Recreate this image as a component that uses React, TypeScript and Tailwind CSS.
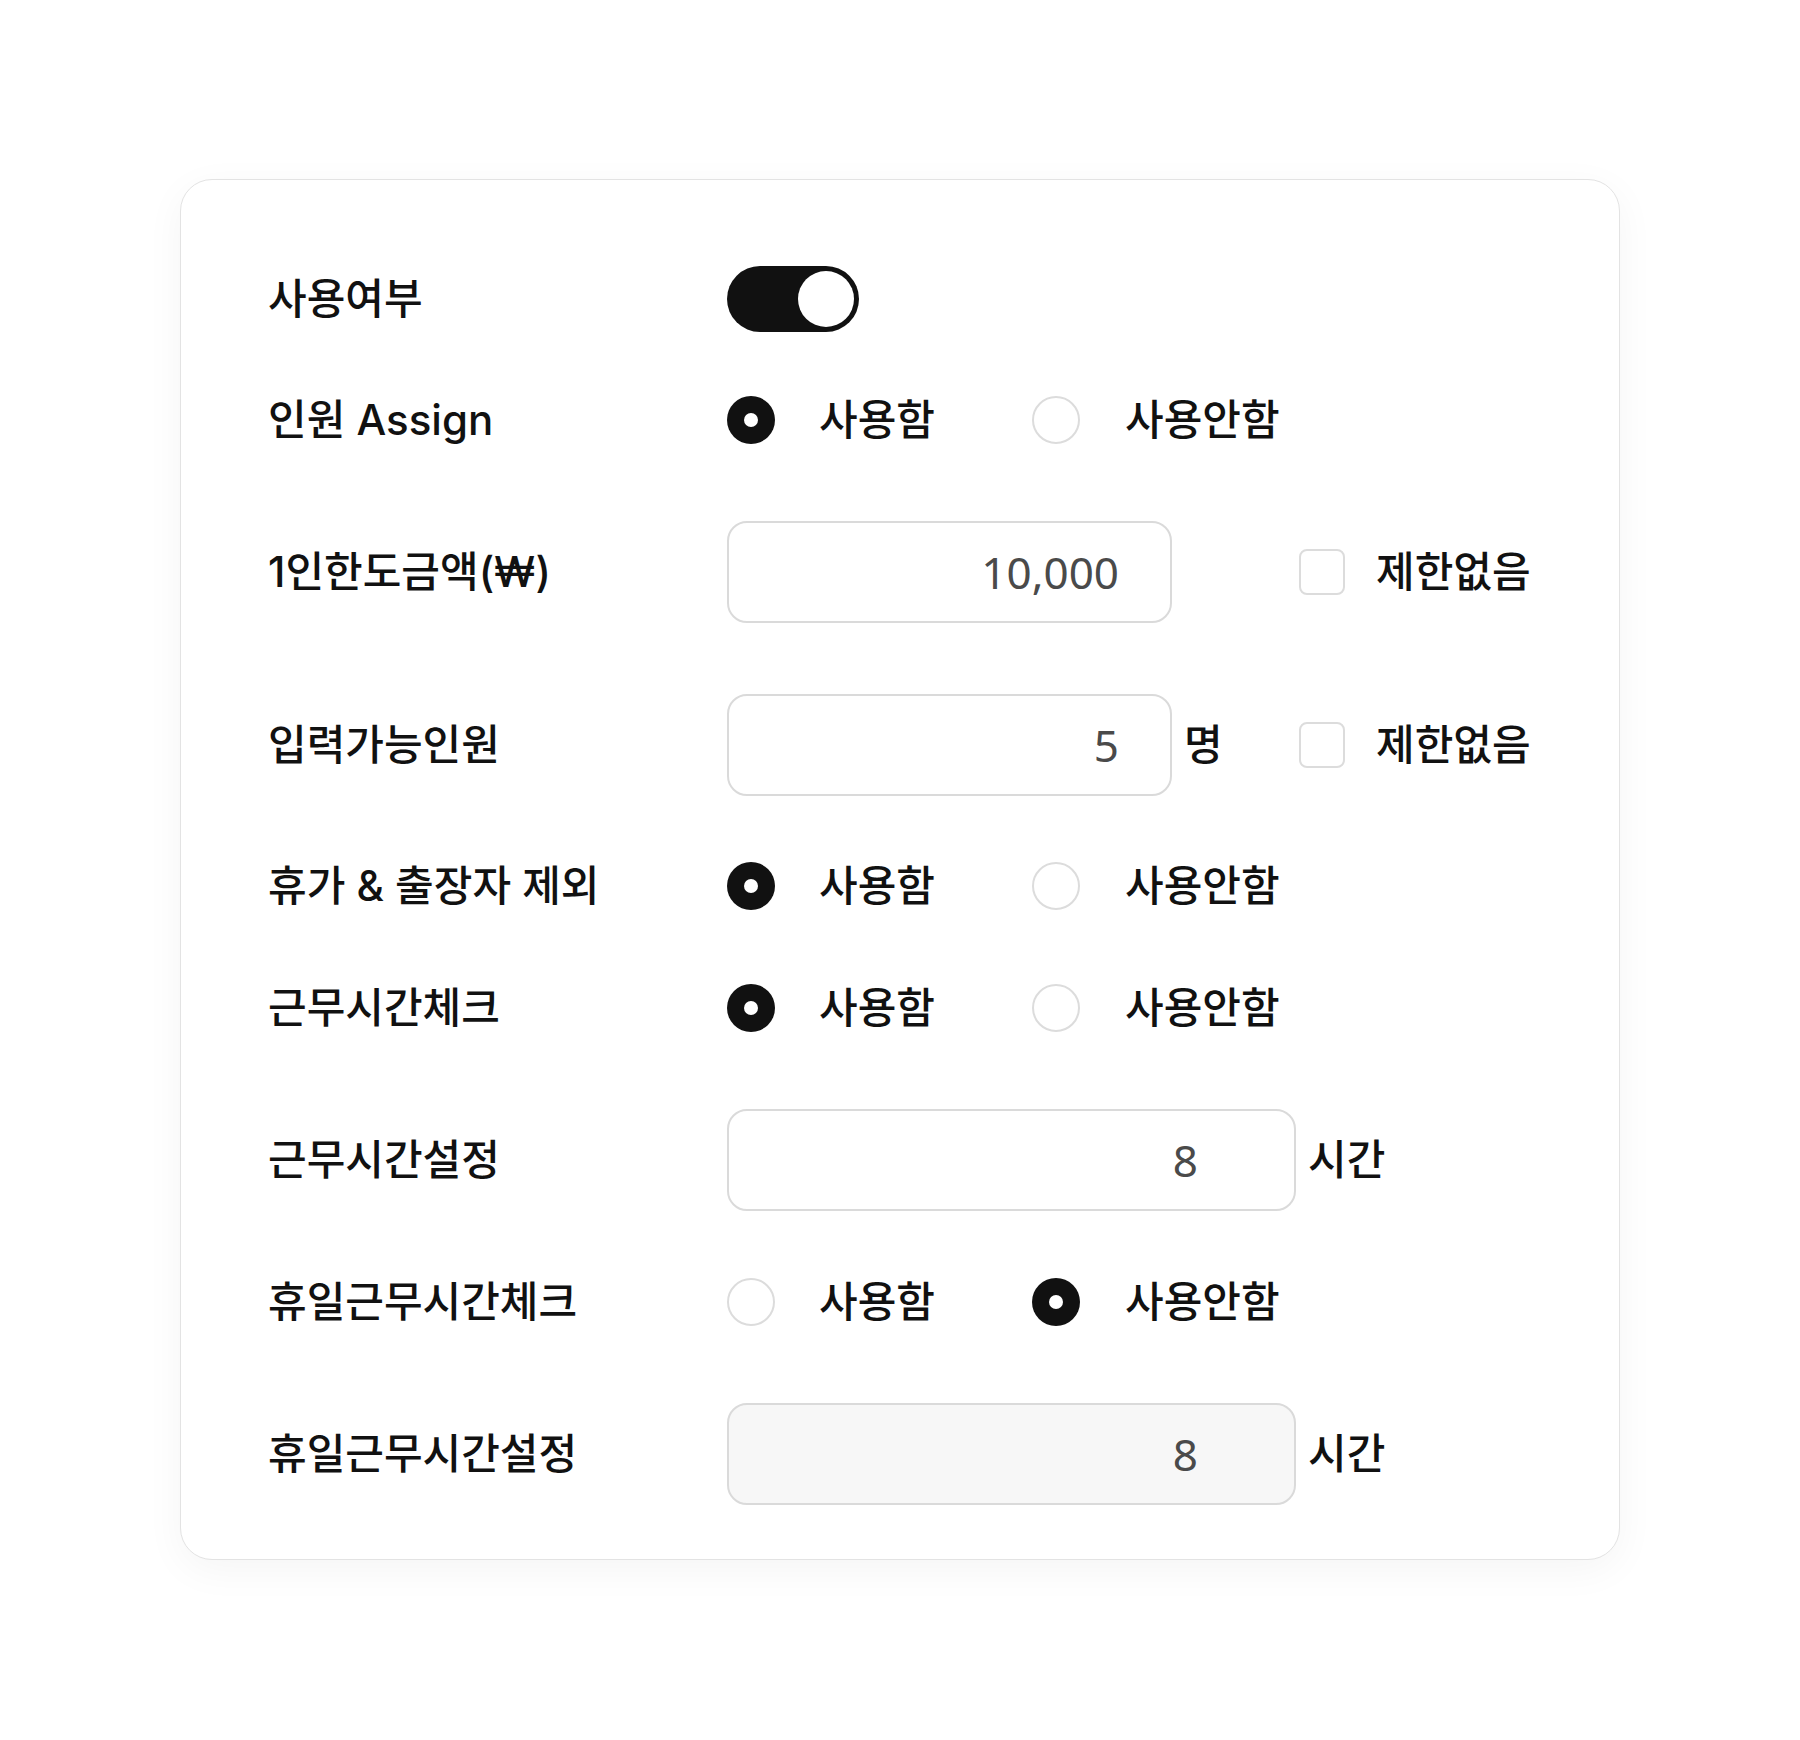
import React from "react";

const KR = { fontFamily: '"Inter", "Noto Sans CJK KR", sans-serif' };
const NUM = { fontFamily: '"Noto Sans", sans-serif' };

const TXT = "text-[42px] tracking-[0px] font-medium text-[#111111] leading-none";

function Label({ children }: { children: React.ReactNode }) {
  return (
    <div className={`w-[459px] shrink-0 ${TXT}`} style={KR}>
      {children}
    </div>
  );
}

function Radio({ checked }: { checked: boolean }) {
  return checked ? (
    <div className="w-[48px] h-[48px] rounded-full bg-[#111111] flex items-center justify-center shrink-0">
      <div className="w-[14px] h-[14px] rounded-full bg-white" />
    </div>
  ) : (
    <div className="w-[48px] h-[48px] rounded-full border-2 border-[#dcdcdc] bg-white shrink-0" />
  );
}

function RadioRow({ label, first, mt }: { label: React.ReactNode; first: boolean; mt: string }) {
  return (
    <div className={`flex items-center ${mt}`}>
      <Label>{label}</Label>
      <div className="flex items-center w-[305px] shrink-0">
        <Radio checked={first} />
        <span className={`ml-[44px] ${TXT}`} style={KR}>사용함</span>
      </div>
      <div className="flex items-center">
        <Radio checked={!first} />
        <span className={`ml-[45px] ${TXT}`} style={KR}>사용안함</span>
      </div>
    </div>
  );
}

function Checkbox() {
  return (
    <div className="flex items-center">
      <div className="w-[46px] h-[46px] rounded-[8px] border-2 border-[#dcdcdc] bg-white shrink-0" />
      <span className={`ml-[31px] ${TXT}`} style={KR}>제한없음</span>
    </div>
  );
}

export default function App() {
  return (
    <div className="w-[1800px] h-[1740px] bg-white pt-[179px]">
      <div className="mx-auto w-[1440px] h-[1381px] rounded-[32px] border border-[#e3e3e3] bg-white shadow-[0_10px_40px_rgba(0,0,0,0.045)] pl-[87px] pt-[86px]">
        {/* 사용여부 */}
        <div className="flex items-center">
          <Label>사용여부</Label>
          <div className="w-[132px] h-[66px] rounded-full bg-[#111111] flex items-center justify-end pr-[5px]">
            <div className="w-[56px] h-[56px] rounded-full bg-white" />
          </div>
        </div>

        <RadioRow label="인원 Assign" first={true} mt="mt-[64px]" />

        {/* 1인한도금액 */}
        <div className="flex items-center mt-[77px]">
          <Label>1인한도금액(₩)</Label>
          <div className="w-[445px] h-[102px] rounded-[20px] border-2 border-[#dadada] bg-white flex items-center justify-end pr-[51px] shrink-0">
            <span className="text-[44px] text-[#4a4a4a] leading-none" style={NUM}>10,000</span>
          </div>
          <div className="w-[127px] shrink-0" />
          <Checkbox />
        </div>

        {/* 입력가능인원 */}
        <div className="flex items-center mt-[71px]">
          <Label>입력가능인원</Label>
          <div className="w-[445px] h-[102px] rounded-[20px] border-2 border-[#dadada] bg-white flex items-center justify-end pr-[51px] shrink-0">
            <span className="text-[44px] text-[#4a4a4a] leading-none" style={NUM}>5</span>
          </div>
          <div className="w-[127px] shrink-0 pl-[12px]">
            <span className={TXT} style={KR}>명</span>
          </div>
          <Checkbox />
        </div>

        <RadioRow label="휴가 & 출장자 제외" first={true} mt="mt-[66px]" />
        <RadioRow label="근무시간체크" first={true} mt="mt-[74px]" />

        {/* 근무시간설정 */}
        <div className="flex items-center mt-[77px]">
          <Label>근무시간설정</Label>
          <div className="w-[569px] h-[102px] rounded-[20px] border-2 border-[#dadada] bg-white flex items-center justify-end pr-[96px] shrink-0">
            <span className="text-[44px] text-[#4a4a4a] leading-none" style={NUM}>8</span>
          </div>
          <span className={`ml-[12px] ${TXT}`} style={KR}>시간</span>
        </div>

        <RadioRow label="휴일근무시간체크" first={false} mt="mt-[67px]" />

        {/* 휴일근무시간설정 */}
        <div className="flex items-center mt-[77px]">
          <Label>휴일근무시간설정</Label>
          <div className="w-[569px] h-[102px] rounded-[20px] border-2 border-[#dadada] bg-[#f7f7f7] flex items-center justify-end pr-[96px] shrink-0">
            <span className="text-[44px] text-[#4a4a4a] leading-none" style={NUM}>8</span>
          </div>
          <span className={`ml-[12px] ${TXT}`} style={KR}>시간</span>
        </div>
      </div>
    </div>
  );
}
